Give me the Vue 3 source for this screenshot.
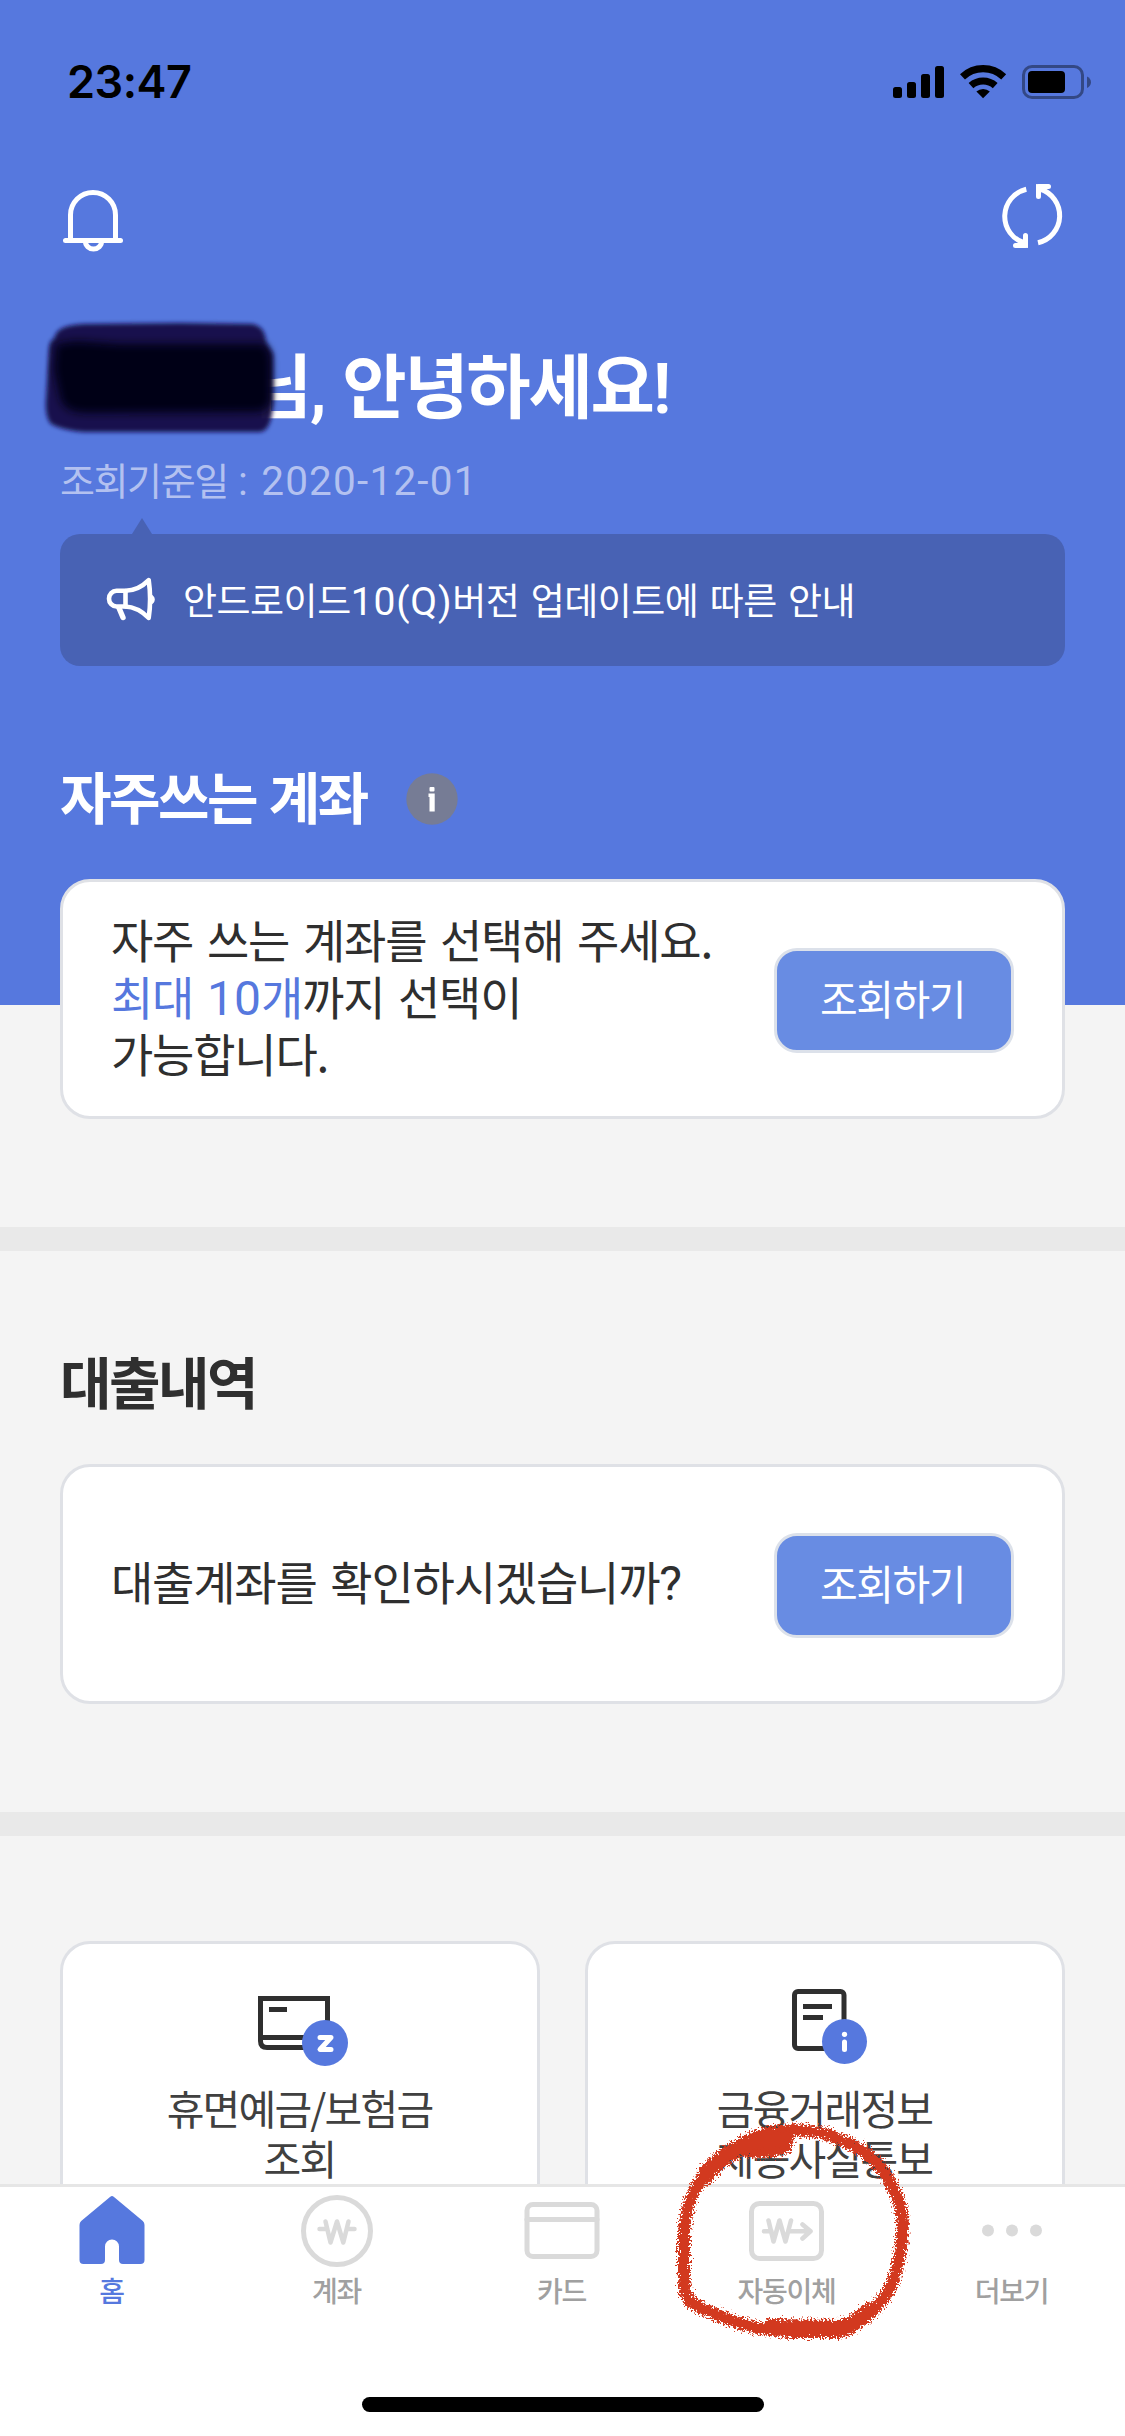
<script setup>
const tabs = [
  { id: 'home', label: '홈', active: true },
  { id: 'account', label: '계좌' },
  { id: 'card', label: '카드' },
  { id: 'transfer', label: '자동이체' },
  { id: 'more', label: '더보기' },
]
</script>

<template>
  <div class="screen">
    <main class="content">
      <section class="top">
        <div class="status">
          <span class="time">23:47</span>
          <svg class="status-icons" width="200" height="40" viewBox="892 62 200 40">
            <rect x="893" y="87" width="9" height="11" rx="2.5" />
            <rect x="907" y="82" width="9" height="16" rx="2.5" />
            <rect x="921" y="74" width="9" height="24" rx="2.5" />
            <rect x="935" y="66" width="9" height="32" rx="2.5" />
            <g fill="none" stroke="#000" stroke-width="7.2">
              <path d="M962.5 76.8A30 30 0 0 1 1003.700 76.800" />
              <path d="M971 85.600A18.200 18.200 0 0 1 995.200 85.600" />
            </g>
            <path d="M983.100 98.300L976.400 91.600A9.600 9.600 0 0 1 989.800 91.600Z" />
            <rect x="1023.500" y="66.500" width="59" height="31" rx="8.500" fill="none" stroke="#000" stroke-opacity=".4" stroke-width="3" />
            <rect x="1028" y="71" width="37" height="22" rx="4" />
            <path d="M1087 76.500Q1091 78.500 1091 82.200Q1091 86 1087 88Z" fill-opacity=".4" />
          </svg>
        </div>

        <div class="toolbar">
          <svg width="62" height="64" viewBox="62 184 62 64" class="line-icon">
            <path d="M70.500 240V215A22.500 22.500 0 0 1 115.500 215V240" />
            <path d="M65.500 240.500H120.500" stroke-linecap="round" />
            <path d="M85.500 241.500A8 7.500 0 0 0 101.500 241.500" />
          </svg>
          <svg width="62" height="64" viewBox="1002 184 62 64" class="line-icon">
            <path d="M1026.300 189.300A27.800 27.800 0 0 0 1024.500 243" />
            <path d="M1015.500 245.500H1025.500V235.500" stroke-linecap="round" stroke-linejoin="round" />
            <path d="M1038 242.700A27.800 27.800 0 0 0 1040 189" />
            <path d="M1048.500 186.500H1038.500V196.500" stroke-linecap="round" stroke-linejoin="round" />
            <path d="M1028 248V238L1018 246ZM1036 184V195L1046 186Z" fill="#fff" stroke="none" />
          </svg>
        </div>

        <div class="greeting">
          <h1>님<span class="n">,</span> 안녕하세요<span class="n">!</span></h1>
          <svg class="redaction" width="250" height="126" viewBox="36 314 250 126">
            <defs>
              <filter id="soft" x="-10%" y="-10%" width="120%" height="120%"><feGaussianBlur stdDeviation="2" /></filter>
              <filter id="softer" x="-10%" y="-10%" width="120%" height="120%"><feGaussianBlur stdDeviation="4" /></filter>
            </defs>
            <path d="M55 336Q58 325 84 324L180 323L252 324Q265 326 266 342L273 354L273 402Q272 431 260 432L84 432Q60 430 50 423Q45 415 46 400L49 348Q50 340 54 339Z" fill="#170e48" fill-opacity=".97" filter="url(#soft)" />
            <path d="M56 344L76 341L120 344L264 344Q271 350 271 362V402Q268 411 258 412L90 413Q64 414 60 398L54 370Z" fill="#020016" filter="url(#softer)" />
          </svg>
        </div>
        <p class="date">조회기준일 <span class="n">: 2020-12-01</span></p>

        <div class="notice">
          <svg class="horn" width="50" height="46" viewBox="106 579 50 46">
            <g fill="none" stroke="#fff" stroke-width="4.600" stroke-linejoin="round" stroke-linecap="round">
              <path d="M116.500 592.800H125Q138 593 148.700 582.200Q151.500 601 148.700 620Q138 609 125 608.500H116.500A7.500 7.850 0 0 1 116.500 592.800Z" />
              <path d="M125.500 593V608.500" />
              <path d="M119 610L123 619.500" stroke-width="5.400" />
            </g>
            <path d="M150.500 596Q154.800 598 154.800 601.500Q154.800 605 150.500 607Z" fill="#fff" />
          </svg>
          <p>안드로이드<span class="n">10(Q)</span>버전 업데이트에 따른 안내</p>
        </div>

        <div class="heading on-blue">
          <h2>자주쓰는 계좌</h2>
          <svg width="52" height="52" viewBox="0 0 52 52">
            <circle cx="26" cy="26" r="25.700" fill="#767c95" />
            <rect x="23.500" y="14" width="5" height="4.500" rx="1" fill="#fff" />
            <path d="M22.500 20.500H28.700V38.500H23.500V24H22.500Z" fill="#fff" />
          </svg>
        </div>

        <div class="card">
          <p>자주 쓰는 계좌를 선택해 주세요.<br /><em>최대 <span class="n">10</span>개</em>까지 선택이<br />가능합니다.</p>
          <button>조회하기</button>
        </div>
      </section>

      <section class="loans">
        <div class="heading"><h2>대출내역</h2></div>
        <div class="card">
          <p class="question">대출계좌를 확인하시겠습니까<span class="n">?</span></p>
          <button>조회하기</button>
        </div>
      </section>

      <section class="tiles">
        <div class="tile">
          <svg width="100" height="85" viewBox="250 1985 100 85">
            <g fill="none" stroke="#2f2f2f" stroke-width="5">
              <path d="M260.500 1998.500H327.500V2047.500H267Q260.500 2047.500 260.500 2041Z" />
              <path d="M260 2037.500H327M269 2009.500H287" />
            </g>
            <circle cx="325" cy="2043" r="23" fill="#5678de" />
            <path d="M320 2037.500H331L320 2049.500H331" fill="none" stroke="#fff" stroke-width="5" stroke-linejoin="round" stroke-linecap="round" />
          </svg>
          <p>휴면예금/보험금<br />조회</p>
        </div>
        <div class="tile">
          <svg width="100" height="85" viewBox="775 1985 100 85">
            <g fill="none" stroke="#2f2f2f" stroke-width="5">
              <rect x="794.500" y="1991.500" width="49.500" height="57" rx="3.500" />
              <path d="M803 2006.500H832M803 2017.500H823" />
            </g>
            <circle cx="844.500" cy="2041.500" r="22.500" fill="#5678de" />
            <circle cx="844.500" cy="2034.300" r="2.600" fill="#fff" />
            <path d="M844.500 2042V2049.500" fill="none" stroke="#fff" stroke-width="5" stroke-linecap="round" />
          </svg>
          <p>금융거래정보<br />제공사실통보</p>
        </div>
      </section>
    </main>

    <nav class="tabbar">
      <div class="tabs">
        <div v-for="t in tabs" :key="t.id" class="tab" :class="{ active: t.active }">
          <svg width="100" height="80" viewBox="0 0 100 80">
            <path v-if="t.id === 'home'" fill="#5678de" d="M48.300 6.800Q50 5.400 51.700 6.800L80.800 31Q82.500 32.500 82.500 35V70Q82.500 74 78.500 74H61Q57 74 57 70V56.500A7 7 0 0 0 43 56.500V70Q43 74 39 74H21.500Q17.500 74 17.500 70V35Q17.500 32.500 19.200 31Z" />
            <g v-else-if="t.id === 'account'" class="gray">
              <circle cx="50" cy="41" r="33.500" />
              <path d="M38.500 31.500L43.500 52.500L50 31.500L56.300 52.500L61.500 31.500M32.500 39H39M61 39H67.500" stroke-width="4.500" />
            </g>
            <g v-else-if="t.id === 'card'" class="gray">
              <rect x="15" y="14.500" width="70" height="52" rx="6" />
              <path d="M15 29.500H85" />
            </g>
            <g v-else-if="t.id === 'transfer'" class="gray">
              <rect x="14.500" y="13.500" width="70" height="55" rx="8" />
              <path d="M31.500 30.500L36.500 51.500L42.500 30.500L48.500 51.500L54 30.500M27 41.300H34.500M51.500 41.300H73.500M65.500 34.500L73.500 41.300L65.500 48.500" stroke-width="4.600" />
            </g>
            <g v-else fill="#dadada">
              <circle cx="26" cy="40.500" r="6" /><circle cx="50" cy="40.500" r="6" /><circle cx="74" cy="40.500" r="6" />
            </g>
          </svg>
          <span>{{ t.label }}</span>
        </div>
      </div>
      <div class="home-indicator"></div>
    </nav>

    <svg class="marker" width="270" height="250" viewBox="660 2105 270 250">
      <defs>
        <filter id="crayon" x="-10%" y="-10%" width="120%" height="120%" color-interpolation-filters="sRGB">
          <feTurbulence type="fractalNoise" baseFrequency=".55" numOctaves="3" seed="4" result="n" />
          <feDisplacementMap in="SourceGraphic" in2="n" scale="13" xChannelSelector="R" yChannelSelector="G" />
        </filter>
      </defs>
      <g fill="none" stroke="#d2391f" stroke-linecap="round" stroke-linejoin="round" filter="url(#crayon)">
        <path stroke-width="12" d="M786 2147Q765 2155 741 2150Q718 2160 704 2178Q686 2196 684 2233L684 2272Q683 2290 689 2300Q700 2309 720 2316Q748 2329 790 2332L838 2332Q852 2330 864 2318Q884 2303 892 2283Q901 2262 903 2225Q902 2200 886 2175Q870 2150 839 2139Q815 2128 780 2131Q755 2134 735 2148L704 2180" />
        <path stroke-width="17" d="M786 2139L752 2143Q728 2150 706 2174" />
        <path stroke-width="16" d="M770 2327L842 2328Q856 2324 870 2310" />
      </g>
    </svg>
  </div>
</template>

<style>
body { margin: 0; }
</style>

<style scoped>
.screen {
  position: relative;
  width: 1125px;
  height: 2436px;
  overflow: hidden;
  background: #f4f4f4;
  color: #2f2f2f;
  font-family: "Noto Sans CJK KR", sans-serif;
  white-space: nowrap;
}
.screen svg { display: block; flex: none; }
h1, h2, p { margin: 0; }
.n { font-family: Roboto, sans-serif; line-height: 0; }
.content { height: 2184px; overflow: hidden; }

.top {
  background: linear-gradient(#5678de 1005px, #f4f4f4 1005px);
  padding: 0 60px 108px;
  border-bottom: 24px solid #e9e9e9;
}
.status {
  height: 164px;
  margin: 0 -26px 0 0;
  padding-left: 7px;
  display: flex;
  align-items: center;
  justify-content: space-between;
  color: #000;
}
.time { font: 600 45px/60px Inter, sans-serif; letter-spacing: -.5px; }
.status-icons { margin-right: -1px; }
.toolbar { margin: 20px 1px 0 2px; display: flex; justify-content: space-between; }
.line-icon { overflow: visible; fill: none; stroke: #fff; stroke-width: 5; }

.greeting { position: relative; margin-top: 95px; padding-left: 188px; color: #fff; }
h1 { font-size: 70px; line-height: 80px; font-weight: 600; letter-spacing: -2.300px; word-spacing: 2px; }
h1 .n { letter-spacing: 0; }
.redaction { position: absolute; left: -24px; top: -29px; }
.date { margin-top: 31px; font-size: 38px; line-height: 50px; letter-spacing: -1.400px; word-spacing: 3px; color: #b3c1f0; }
.date .n { font-size: 40.500px; letter-spacing: 1.200px; word-spacing: 1px; }

.notice {
  position: relative;
  margin-top: 30px;
  height: 132px;
  border-radius: 20px;
  background: #4862b4;
  display: flex;
  align-items: center;
  padding-left: 46px;
  color: #fff;
}
.notice::before {
  content: "";
  position: absolute;
  left: 72px;
  top: -16px;
  border: solid transparent;
  border-width: 0 10.500px 16px;
  border-bottom-color: #4862b4;
}
.notice p { margin: 0 0 2px 27px; font-size: 37px; line-height: 60px; letter-spacing: -.5px; word-spacing: 3.500px; }
.notice .n { font-size: 39px; letter-spacing: .8px; }

.heading { display: flex; align-items: center; margin-top: 94px; height: 70px; }
.heading svg { margin: 8px 0 0 39px; }
.on-blue { color: #fff; }
h2 { font-size: 56px; line-height: 70px; font-weight: 600; letter-spacing: -2.500px; word-spacing: 2.500px; }

.card {
  box-sizing: border-box;
  height: 240px;
  margin-top: 49px;
  border: 3px solid #dfe1e6;
  border-radius: 30px;
  background: #fff;
  display: flex;
  align-items: center;
  justify-content: space-between;
  padding: 0 48px;
}
.card p { font-size: 46px; line-height: 57px; letter-spacing: -1.200px; word-spacing: 4.600px; padding-bottom: 7px; }
.card em { font-style: normal; color: #5678de; }
.card .n { font-size: 48px; letter-spacing: 0; }
.card button {
  box-sizing: border-box;
  width: 240px;
  height: 105px;
  margin: 3px 0 0;
  padding: 0 3px 8px 0;
  border: 3px solid #dce1ea;
  border-radius: 23px;
  background: #688ce3;
  color: #fff;
  font: 400 41px/60px "Noto Sans CJK KR", sans-serif;
  letter-spacing: -1.500px;
}

.loans { padding: 0 60px 108px; border-bottom: 24px solid #e9e9e9; display: flow-root; }
.tiles { display: flex; gap: 45px; padding: 105px 60px 0; }
.tile {
  flex: 1;
  box-sizing: border-box;
  height: 300px;
  border: 3px solid #dfe1e6;
  border-radius: 30px;
  background: #fff;
  padding-top: 41px;
  display: flex;
  flex-direction: column;
  align-items: center;
}
.tile p { margin-top: 12px; padding-right: 1px; font-size: 41px; line-height: 50px; letter-spacing: -1.800px; text-align: center; color: #404040; }

.tabbar {
  box-sizing: border-box;
  height: 252px;
  border-top: 3px solid #e6e6e6;
  background: #fff;
  display: flex;
  flex-direction: column;
  align-items: center;
  justify-content: space-between;
  padding: 3px 0 24px;
}
.tabs { display: flex; width: 100%; }
.tab { flex: 1; padding-right: 2px; display: flex; flex-direction: column; align-items: center; gap: 2px; }
.tab span { font-size: 28px; line-height: 36px; font-weight: 500; letter-spacing: -1.300px; color: #a0a0a0; }
.tab.active span { color: #5678de; }
.gray { fill: none; stroke: #dadada; stroke-width: 5; stroke-linecap: round; stroke-linejoin: round; }
.home-indicator { width: 402px; height: 15px; border-radius: 8px; background: #000; }
.marker { position: absolute; left: 660px; top: 2105px; overflow: visible; }
</style>
